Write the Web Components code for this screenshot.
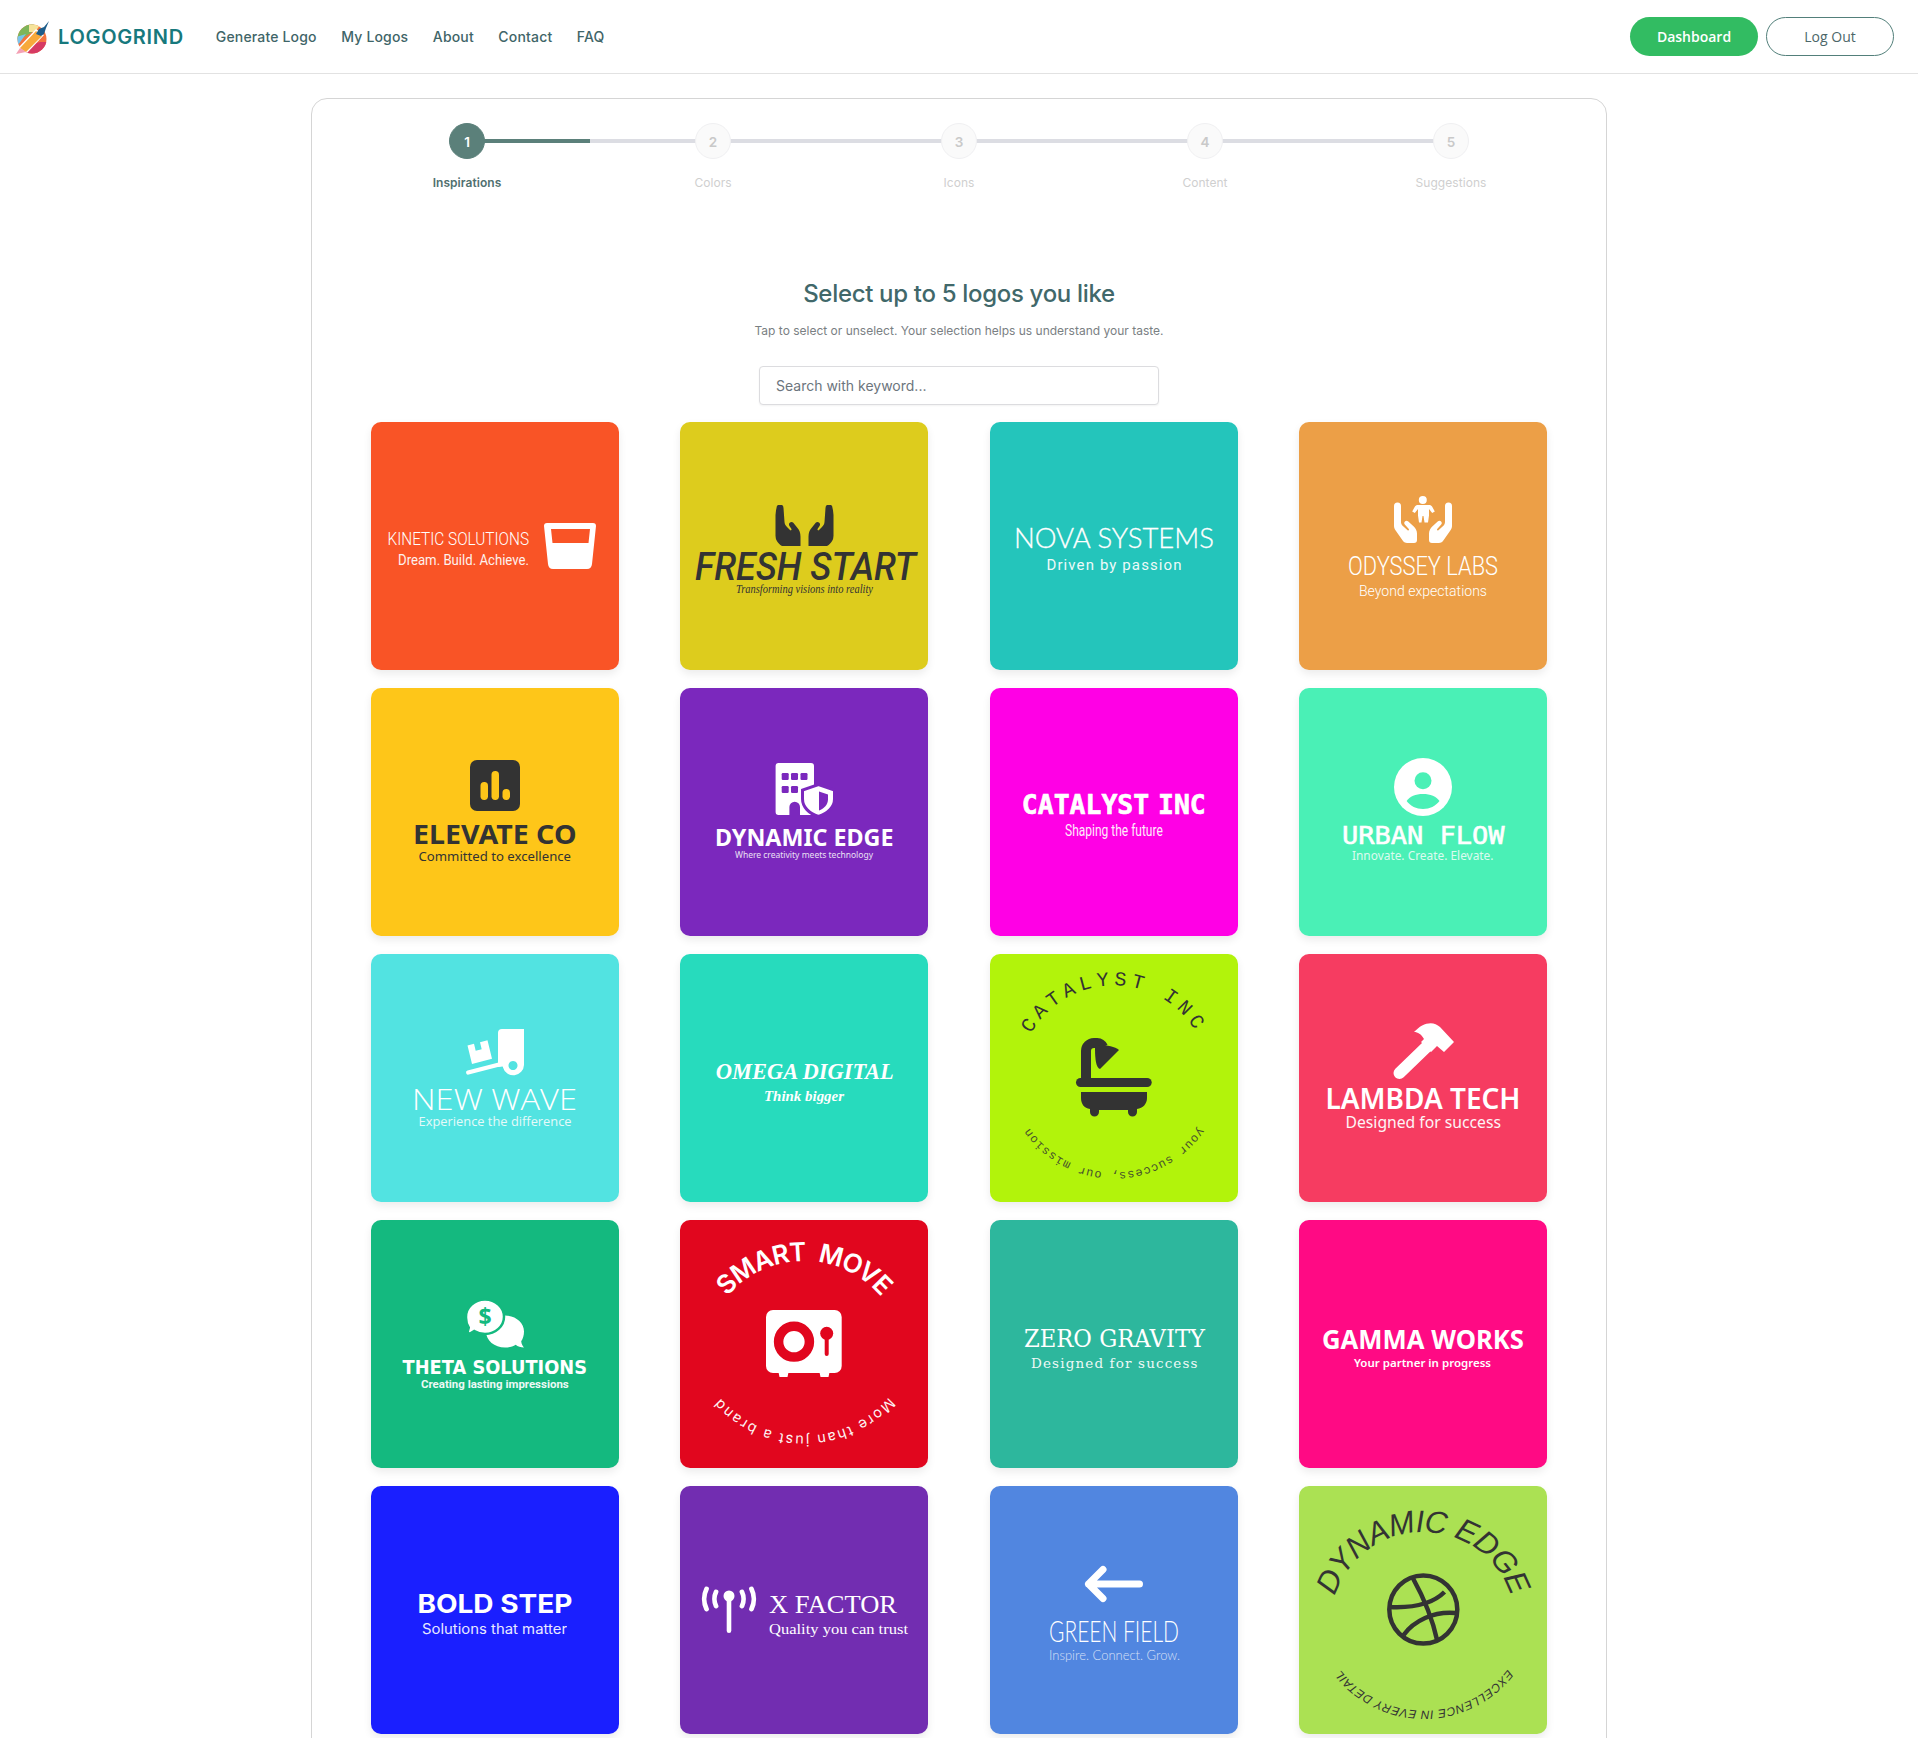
<!DOCTYPE html>
<html>
<head>
<meta charset="utf-8">
<title>Logogrind</title>
<style>
html, body { margin: 0; background: #fff; font-family: Inter, "Liberation Sans", sans-serif; }
body { height: 1738px; overflow: hidden; }
logo-tile svg { display: block; width: 248px; height: 248px; }
logo-tile text { fill: currentColor; }
</style>
</head>
<body>

<svg width="0" height="0" style="position:absolute">
  <defs>
    <symbol id="hands" viewBox="0 0 58 41">
      <path d="M0 4a3.5 3.5 0 0 1 7 0v16c0 1.5.6 2.7 1.6 3.7l5 4.6c.8.7 1.8-.3 1.2-1.2l-4-4.6c-1.8-2.2 1-5 3.2-3.2l5.5 5c2 1.9 3.5 4.5 3.5 7.2V38a3 3 0 0 1-3 3h-7c-1.5 0-2.8-.6-3.8-1.7L2 29c-1.3-1.5-2-3.2-2-5z"/>
      <path d="M58 4a3.5 3.5 0 0 0-7 0v16c0 1.500-.6 2.700-1.600 3.700l-5 4.600c-.8.7-1.800-.3-1.200-1.200l4-4.600c1.800-2.200-1-5-3.200-3.200l-5.500 5c-2 1.900-3.500 4.500-3.500 7.200V38a3 3 0 0 0 3 3h7c1.500 0 2.800-.6 3.800-1.700L56 29c1.300-1.500 2-3.200 2-5z"/>
    </symbol>
    <symbol id="fat-hand" viewBox="0 0 28 41">
      <path d="M1 3a3.500 3.500 0 0 1 7 0l1 14c.2 2 1 3.500 2.500 5l3 3c1 1 2-.2 1.300-1.200l-2-3c-1.500-2.500 2-5 4-3l4 5c2 2.200 3.200 5 3.200 9v8.500a3 3 0 0 1-3 3h-4c-8 0-14-2-17-8-3-6-2-15-2-23z"/>
    </symbol>
  </defs>
</svg>

<app-header>
  <nav-link>Generate Logo</nav-link>
  <nav-link>My Logos</nav-link>
  <nav-link>About</nav-link>
  <nav-link>Contact</nav-link>
  <nav-link>FAQ</nav-link>
</app-header>

<wizard-card>
  <step-bar>
    <step-item n="1" state="active">Inspirations</step-item>
    <step-item n="2">Colors</step-item>
    <step-item n="3">Icons</step-item>
    <step-item n="4">Content</step-item>
    <step-item n="5" last>Suggestions</step-item>
  </step-bar>

  <wizard-head>
    <span slot="title">Select up to 5 logos you like</span>
    <span slot="sub">Tap to select or unselect. Your selection helps us understand your taste.</span>
  </wizard-head>

  <search-box></search-box>

  <logo-grid>
    <!-- row 1 -->
    <logo-tile bg="#f95426" fg="#fff">
      <svg viewBox="0 0 248 248">
        <text x="16.500" y="123" font-family="Roboto" font-weight="300" font-size="19" textLength="141.500" lengthAdjust="spacingAndGlyphs">KINETIC SOLUTIONS</text>
        <text x="27" y="143" font-family="Roboto" font-size="14" opacity=".92" textLength="131" lengthAdjust="spacingAndGlyphs">Dream. Build. Achieve.</text>
        <path fill="#fff" fill-rule="evenodd" d="M173 104q0-3 3-3h46q3 0 3 3l-4 38q-.5 5-5 5h-34q-4.500 0-5-5zM180 107l1.500 14h36l1.500-14z"/>
      </svg>
    </logo-tile>
    <logo-tile bg="#ddcc1d" fg="#333">
      <svg viewBox="0 0 248 248">
        <use href="#fat-hand" x="95.500" y="83" width="28" height="41" fill="#333"/>
        <g transform="translate(249 0) scale(-1 1)"><use href="#fat-hand" x="95.500" y="83" width="28" height="41" fill="#333"/></g>
        <text x="15" y="158" font-family="Roboto" font-style="italic" font-weight="500" font-size="38" textLength="221" lengthAdjust="spacingAndGlyphs">FRESH START</text>
        <text x="56" y="171" font-family="Liberation Serif" font-style="italic" font-size="11.500" textLength="137" lengthAdjust="spacingAndGlyphs">Transforming visions into reality</text>
      </svg>
    </logo-tile>
    <logo-tile bg="#24c5bb" fg="#fff">
      <svg viewBox="0 0 248 248">
        <text x="24" y="126" font-family="Lato" font-weight="300" font-size="28" stroke="#fff" stroke-width=".3" textLength="200" lengthAdjust="spacingAndGlyphs">NOVA SYSTEMS</text>
        <text x="56.500" y="148" font-family="Roboto" font-size="15" opacity=".92" textLength="135" lengthAdjust="spacing">Driven by passion</text>
      </svg>
    </logo-tile>
    <logo-tile bg="#ec9f47" fg="#fff">
      <svg viewBox="0 0 248 248">
        <use href="#hands" x="95" y="80" width="58" height="41" fill="#fff"/>
        <circle cx="123.800" cy="78" r="4" fill="#fff"/>
        <path fill="#fff" d="M118 83h12c1.500 0 2.500.6 3.200 1.700l2.600 4.800-2.600 1.500-3.200-4v6.500l-1 7h-3.500l-1-6.500h-1l-1 6.500H120l-1-7V87l-3.200 4-2.600-1.500 2.600-4.800c.7-1.100 1.700-1.700 3.200-1.700z"/>
        <text x="49" y="153" font-family="Roboto" font-weight="300" font-size="25" textLength="150" lengthAdjust="spacingAndGlyphs">ODYSSEY LABS</text>
        <text x="60" y="173.500" font-family="Roboto" font-weight="300" font-size="15" textLength="128" lengthAdjust="spacingAndGlyphs">Beyond expectations</text>
      </svg>
    </logo-tile>

    <!-- row 2 -->
    <logo-tile bg="#fec619" fg="#333">
      <svg viewBox="0 0 248 248">
        <rect x="99" y="72" width="50" height="51" rx="7" fill="#333"/>
        <rect x="109.500" y="94" width="7.500" height="18" rx="3.700" fill="#fec619"/>
        <rect x="120.500" y="83" width="7.500" height="29" rx="3.700" fill="#fec619"/>
        <rect x="131.500" y="101" width="7.500" height="11" rx="3.700" fill="#fec619"/>
        <text x="42" y="156" font-family="Noto Sans" font-weight="700" font-size="26.500" textLength="163.500" lengthAdjust="spacingAndGlyphs">ELEVATE CO</text>
        <text x="47.500" y="173" font-family="Noto Sans" font-size="13" textLength="152.500" lengthAdjust="spacingAndGlyphs">Committed to excellence</text>
      </svg>
    </logo-tile>
    <logo-tile bg="#7b28bd" fg="#fff">
      <svg viewBox="0 0 248 248">
        <path fill="#fff" d="M98.600 75h32.400a3 3 0 0 1 3 3v49h-14v-8a5.300 5.300 0 0 0-10.600 0v8H98.600a3 3 0 0 1-3-3V78a3 3 0 0 1 3-3z"/>
        <g fill="#7b28bd">
          <rect x="101.700" y="85" width="7" height="7" rx="1.200"/><rect x="111" y="85" width="7" height="7" rx="1.200"/><rect x="120.500" y="85" width="7" height="7" rx="1.200"/>
          <rect x="101.700" y="98" width="7" height="7" rx="1.200"/><rect x="111" y="98" width="7" height="7" rx="1.200"/>
        </g>
        <path fill="#fff" stroke="#7b28bd" stroke-width="3" d="M138.500 96.500l16 5.500v9c0 8-6.500 14.500-16 17.500-9.500-3-16-9.500-16-17.500v-9z"/>
        <path fill="#7b28bd" d="M139 103.500l9 3v5c0 5-4 9-9 11z"/>
        <text x="35" y="158" font-family="Noto Sans" font-weight="700" font-size="22.500" textLength="178.500" lengthAdjust="spacingAndGlyphs">DYNAMIC EDGE</text>
        <text x="55" y="170" font-family="Noto Sans" font-size="8.500" opacity=".85" textLength="138" lengthAdjust="spacingAndGlyphs">Where creativity meets technology</text>
      </svg>
    </logo-tile>
    <logo-tile bg="#ff00e5" fg="#fff">
      <svg viewBox="0 0 248 248">
        <text x="31.800" y="126" font-family="DejaVu Sans Mono" font-weight="700" font-size="26" stroke="#fff" stroke-width=".6" word-spacing="-7" textLength="184" lengthAdjust="spacingAndGlyphs">CATALYST INC</text>
        <text x="75" y="148" font-family="Roboto" font-size="16.500" opacity=".92" textLength="97.800" lengthAdjust="spacingAndGlyphs">Shaping the future</text>
      </svg>
    </logo-tile>
    <logo-tile bg="#4af0b6" fg="#fff">
      <svg viewBox="0 0 248 248">
        <circle cx="124" cy="99" r="29" fill="#fff"/>
        <circle cx="124" cy="92.700" r="8.500" fill="#4af0b6"/>
        <path fill="#4af0b6" d="M107.600 113c3-4.500 9-7 16.400-7s13.400 2.500 16.500 7c-3.800 5-9.800 8-16.500 8s-12.700-3-16.400-8z"/>
        <text x="43" y="156.300" font-family="DejaVu Sans Mono" font-size="25" stroke="#fff" stroke-width=".6" textLength="162.500" lengthAdjust="spacingAndGlyphs">URBAN FLOW</text>
        <text x="53" y="172" font-family="Noto Sans" font-size="12" opacity=".8" textLength="141.500" lengthAdjust="spacingAndGlyphs">Innovate. Create. Elevate.</text>
      </svg>
    </logo-tile>

    <!-- row 3 -->
    <logo-tile bg="#52e3e1" fg="#fff">
      <svg viewBox="0 0 248 248">
        <path fill="#fff" fill-rule="evenodd" d="M131 75h22v36a10.700 10.700 0 0 1-21 2.500V113l-.5-.5L127 113V79a4 4 0 0 1 4-4zM142 107a4.500 4.500 0 1 0 .01 0z"/>
        <path fill="#fff" d="M96.500 116.500l33-8.500 1.200 4-33 8.500a2 2 0 0 1-1.200-4z"/>
        <path fill="#fff" d="M96.500 91.500l6.500-1.700 1.700 7 6-1.500-1.700-7 7.500-2 4.500 18.500-20 5.200z"/>
        <text x="41" y="156" font-family="Open Sans" font-weight="300" font-size="29" textLength="165" lengthAdjust="spacingAndGlyphs">NEW WAVE</text>
        <text x="47.600" y="172" font-family="Open Sans" font-size="13.500" opacity=".85" textLength="153" lengthAdjust="spacingAndGlyphs">Experience the difference</text>
      </svg>
    </logo-tile>
    <logo-tile bg="#27dbbd" fg="#fff">
      <svg viewBox="0 0 248 248">
        <text x="35.700" y="124.700" font-family="Liberation Serif" font-style="italic" font-weight="700" font-size="24" textLength="178" lengthAdjust="spacingAndGlyphs">OMEGA DIGITAL</text>
        <text x="84" y="146.700" font-family="Liberation Serif" font-style="italic" font-weight="700" font-size="15.500" textLength="80" lengthAdjust="spacingAndGlyphs">Think bigger</text>
      </svg>
    </logo-tile>
    <logo-tile bg="#b2f30b" fg="#333">
      <svg viewBox="0 0 248 248">
        <path id="arc-catalyst" fill="none" d="M30 110A95.500 95.500 0 0 1 218 110"/>
        <text font-family="Liberation Mono" font-size="20"><textPath href="#arc-catalyst" startOffset="50%" text-anchor="middle" letter-spacing="4.800">CATALYST INC</textPath></text>
        <path fill="none" stroke="#333" stroke-width="10" d="M96 124V97a8 8 0 0 1 8-8h3a7 7 0 0 1 6 4"/>
        <path fill="#333" d="M105 94l5-3c7 0 15 1.500 19 5l-19 19c-4-1-5-10-5-21z"/>
        <rect x="86" y="124" width="75.700" height="9" rx="4.500" fill="#333"/>
        <path fill="#333" d="M91 138h66v6c0 6-4 10-10 11v3a4.500 4.500 0 0 1-9 0v-2h-29v2a4.500 4.500 0 0 1-9 0v-3c-6-1-9-5-9-11z"/>
        <path id="arc-catalyst-b" fill="none" d="M221 150A103 103 0 0 1 27 150"/>
        <text font-family="Liberation Mono" font-size="12" opacity=".85"><textPath href="#arc-catalyst-b" startOffset="50%" text-anchor="middle" letter-spacing=".8">your success, our mission</textPath></text>
      </svg>
    </logo-tile>
    <logo-tile bg="#f63c61" fg="#fff">
      <svg viewBox="0 0 248 248">
        <path fill="#fff" d="M115 78c8-9 19-12 26-5l14 15-10 10-7-6-6 6-10-10 3-3c-3-5-6-7-10-7z"/>
        <path fill="none" stroke="#fff" stroke-width="12" stroke-linecap="round" d="M100.500 119l29-28"/>
        <text x="26.500" y="155" font-family="Noto Sans" font-weight="600" font-size="28" textLength="195" lengthAdjust="spacingAndGlyphs">LAMBDA TECH</text>
        <text x="46.500" y="174" font-family="Noto Sans" font-size="15.500" opacity=".95" textLength="155.500" lengthAdjust="spacingAndGlyphs">Designed for success</text>
      </svg>
    </logo-tile>

    <!-- row 4 -->
    <logo-tile bg="#14b97f" fg="#fff">
      <svg viewBox="0 0 248 248">
        <path fill="#fff" d="M153 111.500c0-9-8.500-16-19-16s-19 7-19 16 8.500 16 19 16c4 0 7.700-1 10.700-2.800 2 1.800 5 2.800 8.300 2.800-1.500-1.500-2.500-3.500-2.800-6.200 1.800-2.700 2.800-6 2.800-9.800z"/>
        <path fill="#fff" stroke="#14b97f" stroke-width="2.500" d="M95 96.700c0-9.500 8.500-17.200 19-17.200s19 7.700 19 17.200-8.500 17.200-19 17.200c-4 0-7.700-1-10.700-2.900-2 1.800-5 2.900-8.300 2.900 1.500-1.500 2.500-3.700 2.800-6.300-1.800-3-2.800-7-2.800-9.900z"/>
        <text x="114" y="105" text-anchor="middle" font-family="Noto Sans" font-weight="700" font-size="23" style="fill:#14b97f">$</text>
        <text x="31.600" y="154.300" font-family="DejaVu Sans" font-weight="700" font-size="19" textLength="184.400" lengthAdjust="spacingAndGlyphs">THETA SOLUTIONS</text>
        <text x="50" y="167.700" font-family="Roboto" font-weight="700" font-size="11" opacity=".92" textLength="147.700" lengthAdjust="spacingAndGlyphs">Creating lasting impressions</text>
      </svg>
    </logo-tile>
    <logo-tile bg="#e1061e" fg="#fff">
      <svg viewBox="0 0 248 248">
        <path id="arc-smart" fill="none" d="M25 122A101 101 0 0 1 223 122"/>
        <text font-family="Inter" font-weight="600" font-size="26"><textPath href="#arc-smart" startOffset="50%" text-anchor="middle" letter-spacing="-1" word-spacing="6">SMART MOVE</textPath></text>
        <rect x="86" y="90" width="75.700" height="63" rx="7" fill="#fff"/>
        <path fill="#fff" d="M98 150h11l-1.500 7h-8zM139 150h11l-1.500 7h-8z"/>
        <circle cx="114" cy="121.700" r="15.400" fill="none" stroke="#e1061e" stroke-width="9.500"/>
        <circle cx="146.700" cy="113.300" r="6.500" fill="#e1061e"/>
        <rect x="144.700" y="113" width="4" height="23" rx="2" fill="#e1061e"/>
        <path id="arc-smart-b" fill="none" d="M226 150A112 112 0 0 1 22 150"/>
        <text font-family="Inter" font-size="14.500" opacity=".95"><textPath href="#arc-smart-b" startOffset="50%" text-anchor="middle" letter-spacing="1.700">More than just a brand</textPath></text>
      </svg>
    </logo-tile>
    <logo-tile bg="#2db79d" fg="#fff">
      <svg viewBox="0 0 248 248">
        <text x="34" y="127" font-family="DejaVu Serif" font-size="24" textLength="181" lengthAdjust="spacingAndGlyphs">ZERO GRAVITY</text>
        <text x="41" y="147.500" font-family="DejaVu Serif" font-size="13.500" opacity=".92" textLength="166.500" lengthAdjust="spacing">Designed for success</text>
      </svg>
    </logo-tile>
    <logo-tile bg="#ff0a84" fg="#fff">
      <svg viewBox="0 0 248 248">
        <text x="23" y="128.500" font-family="Noto Sans" font-weight="700" font-size="27" textLength="202" lengthAdjust="spacingAndGlyphs">GAMMA WORKS</text>
        <text x="55" y="146.500" font-family="Noto Sans" font-weight="600" font-size="11.500" textLength="137" lengthAdjust="spacingAndGlyphs">Your partner in progress</text>
      </svg>
    </logo-tile>

    <!-- row 5 -->
    <logo-tile bg="#1a1fff" fg="#fff">
      <svg viewBox="0 0 248 248">
        <text x="46.400" y="126.700" font-family="Inter" font-weight="700" font-size="25.500" textLength="155" lengthAdjust="spacingAndGlyphs">BOLD STEP</text>
        <text x="51" y="148" font-family="Inter" font-size="14" opacity=".9" textLength="145" lengthAdjust="spacingAndGlyphs">Solutions that matter</text>
      </svg>
    </logo-tile>
    <logo-tile bg="#722db1" fg="#fff">
      <svg viewBox="0 0 248 248">
        <circle cx="49" cy="110" r="5.500" fill="#fff"/>
        <rect x="46.700" y="110" width="4.600" height="37" rx="2.300" fill="#fff"/>
        <g fill="none" stroke="#fff" stroke-width="4.800" stroke-linecap="round">
          <path d="M26.500 103c-3 6-3 14 0 20"/>
          <path d="M36 106c-2 4-2 10 0 14"/>
          <path d="M71.500 103c3 6 3 14 0 20"/>
          <path d="M62 106c2 4 2 10 0 14"/>
        </g>
        <text x="89" y="127" font-family="Liberation Serif" font-size="25" textLength="128" lengthAdjust="spacingAndGlyphs">X FACTOR</text>
        <text x="89" y="148" font-family="Liberation Serif" font-size="14.500" textLength="139" lengthAdjust="spacingAndGlyphs">Quality you can trust</text>
      </svg>
    </logo-tile>
    <logo-tile bg="#5186e0" fg="#fff">
      <svg viewBox="0 0 248 248">
        <path fill="none" stroke="#fff" stroke-width="7" stroke-linecap="round" stroke-linejoin="round" d="M149.500 98H98.500M113 83.500L98.500 98 113 112.500"/>
        <text x="59" y="155.700" font-family="Lato" font-weight="300" font-size="29" textLength="130" lengthAdjust="spacingAndGlyphs">GREEN FIELD</text>
        <text x="59" y="174" font-family="Lato" font-weight="300" font-size="14" opacity=".75" textLength="131" lengthAdjust="spacingAndGlyphs">Inspire. Connect. Grow.</text>
      </svg>
    </logo-tile>
    <logo-tile bg="#abe153" fg="#333">
      <svg viewBox="0 0 248 248">
        <path id="arc-dyn" fill="none" d="M32.500 153.600A92.700 92.700 0 1 1 215.500 153.600"/>
        <text font-family="Liberation Sans" font-style="italic" font-size="31"><textPath href="#arc-dyn" startOffset="50%" text-anchor="middle" letter-spacing="-.6">DYNAMIC EDGE</textPath></text>
        <g fill="none" stroke="#333" stroke-width="4.500">
          <circle cx="124.300" cy="123.500" r="34"/>
          <path d="M113.800 92c10 18 20 42 24.500 63"/>
          <path d="M90.500 121c20 1 42-2 55-15"/>
          <path d="M104.600 149c10-14 30-24 52-22"/>
        </g>
        <path id="arc-dyn-b" fill="none" d="M226 150A105.600 105.600 0 0 1 24 150"/>
        <text font-family="Liberation Sans" font-style="italic" font-size="12"><textPath href="#arc-dyn-b" startOffset="50%" text-anchor="middle" letter-spacing=".4">EXCELLENCE IN EVERY DETAIL</textPath></text>
      </svg>
    </logo-tile>
  </logo-grid>
</wizard-card>

<script>
class NavLink extends HTMLElement {
  constructor() {
    super()
    this.attachShadow({ mode: 'open' }).innerHTML = `
<style>
:host { display: block; font: 500 14px Inter, sans-serif; letter-spacing: .17px; color: #3f6568; white-space: nowrap; cursor: pointer; }
</style>
<slot></slot>`
  }
}

class AppHeader extends HTMLElement {
  constructor() {
    super()
    this.attachShadow({ mode: 'open' }).innerHTML = `
<style>
:host { display: flex; align-items: center; height: 73px; padding: 0 24px 0 16px; border-bottom: 1px solid #e2e2e2; background: #fff; }
.brand { display: flex; align-items: center; gap: 9px; margin-right: 32px; margin-top: 1px; }
.word { font: 600 20px Inter, sans-serif; letter-spacing: .68px; color: #17797d; }
nav { display: flex; gap: 24.500px; }
.right { margin-left: auto; display: flex; gap: 8px; }
.btn { box-sizing: border-box; height: 39px; width: 128px; border-radius: 20px; display: flex; align-items: center; justify-content: center; font: 600 14px "Open Sans", sans-serif; }
.dash { background: #32bc62; color: #fff; }
.out { border: 1px solid #527f7a; color: #4d6769; font-weight: 500; }
</style>
<div class="brand">
  <svg width="33" height="33" viewBox="0 0 33 33">
    <clipPath id="ball"><circle cx="16" cy="18" r="14.500"/></clipPath>
    <g clip-path="url(#ball)">
      <rect width="33" height="33" fill="#f4743f"/>
      <path fill="#7eb55a" d="M0 0h18v10L2 20 0 14z"/>
      <path fill="#f6e39a" d="M13 0h14l-8 11h-6z"/>
      <path fill="#79c4ee" d="M0 16l10-3-8 11H0z"/>
      <path fill="#d63a63" d="M5 33l9-9 10-3h9v12z"/>
    </g>
    <path fill="#fff" d="M3 26L20 8l8 6-17 18z"/>
    <path fill="#f7a93b" d="M4 27l16-17 6 5-16 16z"/>
    <path fill="#f4a0b4" d="M4 27l6 4-10 2z"/>
    <path fill="#1d5d8a" d="M20 13l3-5 5-2 5-6-3 7-2 6-3 2z"/>
  </svg>
  <span class="word">LOGOGRIND</span>
</div>
<nav><slot></slot></nav>
<div class="right">
  <div class="btn dash">Dashboard</div>
  <div class="btn out">Log Out</div>
</div>`
  }
}

class WizardCard extends HTMLElement {
  constructor() {
    super()
    this.attachShadow({ mode: 'open' }).innerHTML = `
<style>
:host { display: flex; flex-direction: column; align-items: center; box-sizing: border-box; width: 1296px; min-height: 1700px; margin: 24px 0 0 311px; padding: 24px 59px 40px; border: 1px solid #d5d5d5; border-radius: 16px; background: #fff; }
</style>
<slot></slot>`
  }
}

class StepBar extends HTMLElement {
  constructor() {
    super()
    this.attachShadow({ mode: 'open' }).innerHTML = `
<style>
:host { display: flex; width: 1230px; flex: none; }
</style>
<slot></slot>`
  }
}

class StepItem extends HTMLElement {
  constructor() {
    super()
    const active = this.getAttribute('state') === 'active'
    this.attachShadow({ mode: 'open' }).innerHTML = `
<style>
:host { display: flex; flex-direction: column; align-items: center; flex: 1; position: relative; }
.line { position: absolute; left: 50%; width: 100%; top: 16px; height: 4px; background: #dcdde3; }
.line i { display: block; width: ${active ? '50%' : '0'}; height: 100%; background: #5b807a; }
.dot { position: relative; box-sizing: border-box; width: 36px; height: 36px; padding-top: 1px; border-radius: 50%; display: flex; align-items: center; justify-content: center;
  font: 600 13.500px Inter, sans-serif; background: ${active ? '#5b807a' : '#fafafa'}; color: ${active ? '#fff' : '#c9c9c9'}; border: 1px solid ${active ? '#5b807a' : '#f0f0f2'}; }
.label { margin-top: 16px; font: ${active ? 600 : 400} 12px/16px Inter, sans-serif; letter-spacing: .05px; color: ${active ? '#51706f' : '#cfcfcf'}; }
</style>
${this.hasAttribute('last') ? '' : '<div class="line"><i></i></div>'}
<div class="dot">${this.getAttribute('n')}</div>
<div class="label"><slot></slot></div>`
  }
}

class WizardHead extends HTMLElement {
  constructor() {
    super()
    this.attachShadow({ mode: 'open' }).innerHTML = `
<style>
:host { display: flex; flex-direction: column; align-items: center; margin-top: 88px; }
.title { font: 500 24px/30px Inter, sans-serif; color: #41686a; letter-spacing: -.32px; }
.sub { margin-top: 14px; font: 400 12px/16px Inter, sans-serif; color: #7a8083; }
</style>
<div class="title"><slot name="title"></slot></div>
<div class="sub"><slot name="sub"></slot></div>`
  }
}

class SearchBox extends HTMLElement {
  constructor() {
    super()
    this.attachShadow({ mode: 'open' }).innerHTML = `
<style>
:host { display: block; margin-top: 27px; }
input { display: block; box-sizing: border-box; width: 400px; height: 39px; padding: 0 16px; border: 1px solid #dcdcdf; border-radius: 4px; outline: 0; box-shadow: 0 1px 2px rgba(0,0,0,.05); font: 400 14px Inter, sans-serif; color: #333; }
input::placeholder { color: #6c757d; opacity: 1; }
</style>
<input type="text" placeholder="Search with keyword...">`
  }
}

class LogoGrid extends HTMLElement {
  constructor() {
    super()
    this.attachShadow({ mode: 'open' }).innerHTML = `
<style>
:host { display: grid; grid-template-columns: repeat(4, 248px); justify-content: space-between; row-gap: 18px; width: 1176px; margin-top: 17px; }
</style>
<slot></slot>`
  }
}

class LogoTile extends HTMLElement {
  constructor() {
    super()
    this.attachShadow({ mode: 'open' }).innerHTML = `
<style>
:host { display: block; width: 248px; height: 248px; border-radius: 10px; overflow: hidden; box-shadow: 0 4px 8px rgba(0,0,0,.08); cursor: pointer; background: ${this.getAttribute('bg')}; color: ${this.getAttribute('fg')}; }
</style>
<slot></slot>`
  }
}

customElements.define('nav-link', NavLink)
customElements.define('app-header', AppHeader)
customElements.define('wizard-card', WizardCard)
customElements.define('step-bar', StepBar)
customElements.define('step-item', StepItem)
customElements.define('wizard-head', WizardHead)
customElements.define('search-box', SearchBox)
customElements.define('logo-grid', LogoGrid)
customElements.define('logo-tile', LogoTile)
</script>
</body>
</html>
